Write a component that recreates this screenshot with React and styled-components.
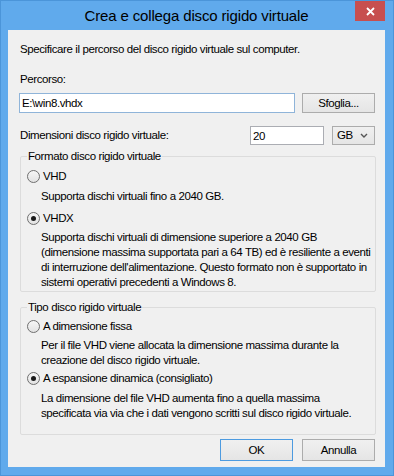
import styled, { createGlobalStyle } from "styled-components";

const GlobalStyle = createGlobalStyle`
  html, body {
    margin: 0;
    padding: 0;
    background: #ffffff;
  }
  body {
    font-family: "Liberation Sans", Arial, sans-serif;
  }
`;

const App = () => {
  return (
    <>
      <GlobalStyle />
      <Window>
        <TitleBar>
          <span />
          <Title>Crea e collega disco rigido virtuale</Title>
          <CloseButton>
            <svg width="9" height="9" viewBox="0 0 9 9">
              <path d="M1 1 L8 8 M8 1 L1 8" stroke="#fff" strokeWidth="1.8" />
            </svg>
          </CloseButton>
        </TitleBar>

        <Panel>
          <Text>Specificare il percorso del disco rigido virtuale sul computer.</Text>
          <Text $mt={15}>Percorso:</Text>

          <PathRow>
            <TextInput $focus defaultValue="E:\win8.vhdx" readOnly />
            <Button $w={73}>Sfoglia...</Button>
          </PathRow>

          <SizeRow>
            <Label>Dimensioni disco rigido virtuale:</Label>
            <TextInput $w={74} defaultValue="20" readOnly />
            <Select>
              <span>GB</span>
              <svg width="8" height="5" viewBox="0 0 8 5">
                <polyline points="1,1 4,4 7,1" fill="none" stroke="#555" strokeWidth="1.4" />
              </svg>
            </Select>
          </SizeRow>

          <Group $mt={4} $pb={1}>
            <Legend>Formato disco rigido virtuale</Legend>
            <Option $mt={5}>
              <Radio />
              VHD
            </Option>
            <Desc $mt={5}>Supporta dischi virtuali fino a 2040 GB.</Desc>
            <Option $mt={7}>
              <Radio $checked />
              VHDX
            </Option>
            <Desc $mt={4}>
              Supporta dischi virtuali di dimensione superiore a 2040 GB
              <br />
              (dimensione massima supportata pari a 64 TB) ed è resiliente a eventi
              <br />
              di interruzione dell'alimentazione. Questo formato non è supportato in
              <br />
              sistemi operativi precedenti a Windows 8.
            </Desc>
          </Group>

          <Group $mt={8} $pb={13}>
            <Legend>Tipo disco rigido virtuale</Legend>
            <Option $mt={4}>
              <Radio />
              A dimensione fissa
            </Option>
            <Desc $mt={4}>
              Per il file VHD viene allocata la dimensione massima durante la
              <br />
              creazione del disco rigido virtuale.
            </Desc>
            <Option $mt={3}>
              <Radio $checked />
              A espansione dinamica (consigliato)
            </Option>
            <Desc $mt={5}>
              La dimensione del file VHD aumenta fino a quella massima
              <br />
              specificata via via che i dati vengono scritti sul disco rigido virtuale.
            </Desc>
          </Group>

          <Footer>
            <Button $w={73} $h={22} $default>
              OK
            </Button>
            <Button $w={73} $h={22}>
              Annulla
            </Button>
          </Footer>
        </Panel>
      </Window>
    </>
  );
};

const Window = styled.div`
  box-sizing: border-box;
  width: 394px;
  height: 476px;
  display: flex;
  flex-direction: column;
  background: #60aaec;
  border: 1px solid #4b95d9;
  padding: 0 8px 8px 7px;
`;

const TitleBar = styled.div`
  height: 29px;
  display: grid;
  grid-template-columns: 1fr auto 1fr;
`;

const Title = styled.div`
  align-self: center;
  font-size: 15px;
  letter-spacing: -0.15px;
  color: #000;
  white-space: nowrap;
`;

const CloseButton = styled.div`
  justify-self: end;
  width: 30px;
  height: 20px;
  background: #c74f4f;
  display: flex;
  align-items: center;
  justify-content: center;
  padding-top: 1px;
  box-sizing: border-box;
`;

const Panel = styled.div`
  flex: 1;
  display: flex;
  flex-direction: column;
  background: #f0f0f0;
  padding: 12px 10px 6px 12px;
  font-size: 11.5px;
  letter-spacing: -0.4px;
  line-height: 15px;
  color: #000;
`;

const Text = styled.div`
  margin-top: ${(p) => p.$mt || 0}px;
  white-space: nowrap;
`;

const PathRow = styled.div`
  display: flex;
  gap: 7px;
  height: 20px;
  margin-top: 6px;
  margin-left: -1px;
`;

const SizeRow = styled.div`
  display: flex;
  align-items: center;
  gap: 8px;
  height: 19px;
  margin-top: 13px;
`;

const Label = styled.div`
  flex: 1;
  white-space: nowrap;
`;

const TextInput = styled.input`
  box-sizing: border-box;
  flex: ${(p) => (p.$w ? "none" : "1")};
  width: ${(p) => (p.$w ? `${p.$w}px` : "auto")};
  height: 100%;
  min-width: 0;
  margin: 0;
  padding: 0 2px;
  border: 1px solid ${(p) => (p.$focus ? "#8fb4d9" : "#abadb3")};
  background: #fff;
  font: inherit;
  letter-spacing: inherit;
  color: #000;
  outline: none;
`;

const Button = styled.button`
  box-sizing: border-box;
  width: ${(p) => p.$w}px;
  height: ${(p) => p.$h || 20}px;
  margin: 0;
  padding: 0;
  border: 1px solid ${(p) => (p.$default ? "#4d9be0" : "#acacac")};
  background: linear-gradient(#f0f0f0, #e5e5e5);
  font: inherit;
  letter-spacing: inherit;
  color: #000;
`;

const Select = styled.div`
  box-sizing: border-box;
  width: 43px;
  height: 19px;
  display: flex;
  align-items: center;
  justify-content: space-between;
  padding: 0 6px 0 4px;
  border: 1px solid #acacac;
  background: linear-gradient(#f0f0f0, #e5e5e5);
`;

const Group = styled.fieldset`
  margin: ${(p) => p.$mt}px -1px 0 0;
  padding: 0 6px ${(p) => p.$pb}px 6px;
  min-width: 0;
  border: 1px solid #dcdcdc;
  border-radius: 2px;
`;

const Legend = styled.legend`
  padding: 0 1px;
  line-height: 15px;
  white-space: nowrap;
`;

const Option = styled.label`
  display: flex;
  align-items: center;
  gap: 3px;
  height: 15px;
  margin-top: ${(p) => p.$mt}px;
  white-space: nowrap;
`;

const Radio = styled.span`
  box-sizing: border-box;
  width: 13px;
  height: 13px;
  flex: none;
  display: grid;
  place-items: center;
  border-radius: 50%;
  border: 1px solid #6f6f6f;
  background: linear-gradient(#f6f6f6, #e2e2e2);

  &::after {
    content: "";
    width: 5px;
    height: 5px;
    border-radius: 50%;
    background: ${(p) => (p.$checked ? "#1a1a1a" : "transparent")};
  }
`;

const Desc = styled.div`
  margin: ${(p) => p.$mt}px 0 0 14px;
  white-space: nowrap;
`;

const Footer = styled.div`
  display: flex;
  justify-content: flex-end;
  gap: 9px;
  margin-top: 4px;
`;

export default App;
